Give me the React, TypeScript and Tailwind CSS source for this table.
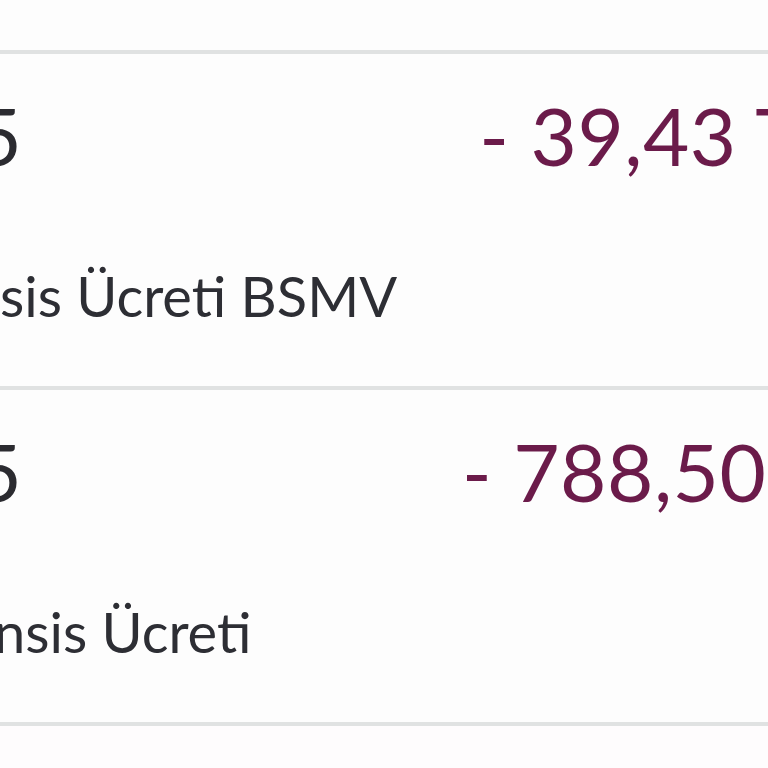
const rows = [
  { date: "12.05.2025", amount: "- 39,43 TL", title: "sis Ücreti BSMV", shift: "ml-0" },
  { date: "12.05.2025", amount: "- 788,50 TL", title: "nsis Ücreti", shift: "ml-[-6px]" },
];

export default function App() {
  return (
    <div className="w-[768px] h-[768px] overflow-hidden bg-[#fdfdfd] font-['Lato','Noto_Sans',sans-serif]">
      {/* önceki satırın alt kısmı */}
      <div className="h-[54px] border-b-4 border-[#e0e2e2]" />

      {rows.map((r, i) => (
        <div key={i} className="h-[336px] border-b-4 border-[#e0e2e2] flex">
          <div className="flex-1 min-w-0 pt-[41px]">
            <div className="w-[22px] flex justify-end">
              <span className="whitespace-nowrap text-[80px] leading-none text-[#2b2b30]">{r.date}</span>
            </div>
            <div className={`mt-[93px] whitespace-nowrap text-[56px] leading-none text-[#2d2e34] ${r.shift}`}>
              {r.title}
            </div>
          </div>
          <div className="w-[400px] shrink-0 mr-[-94px] pt-[41px] text-center">
            <span className="whitespace-nowrap text-[80px] leading-none tracking-[0.5px] text-[#6b1b4a]">{r.amount}</span>
          </div>
        </div>
      ))}

      <div className="h-[60px] bg-[#fefcfd]" />
    </div>
  );
}
